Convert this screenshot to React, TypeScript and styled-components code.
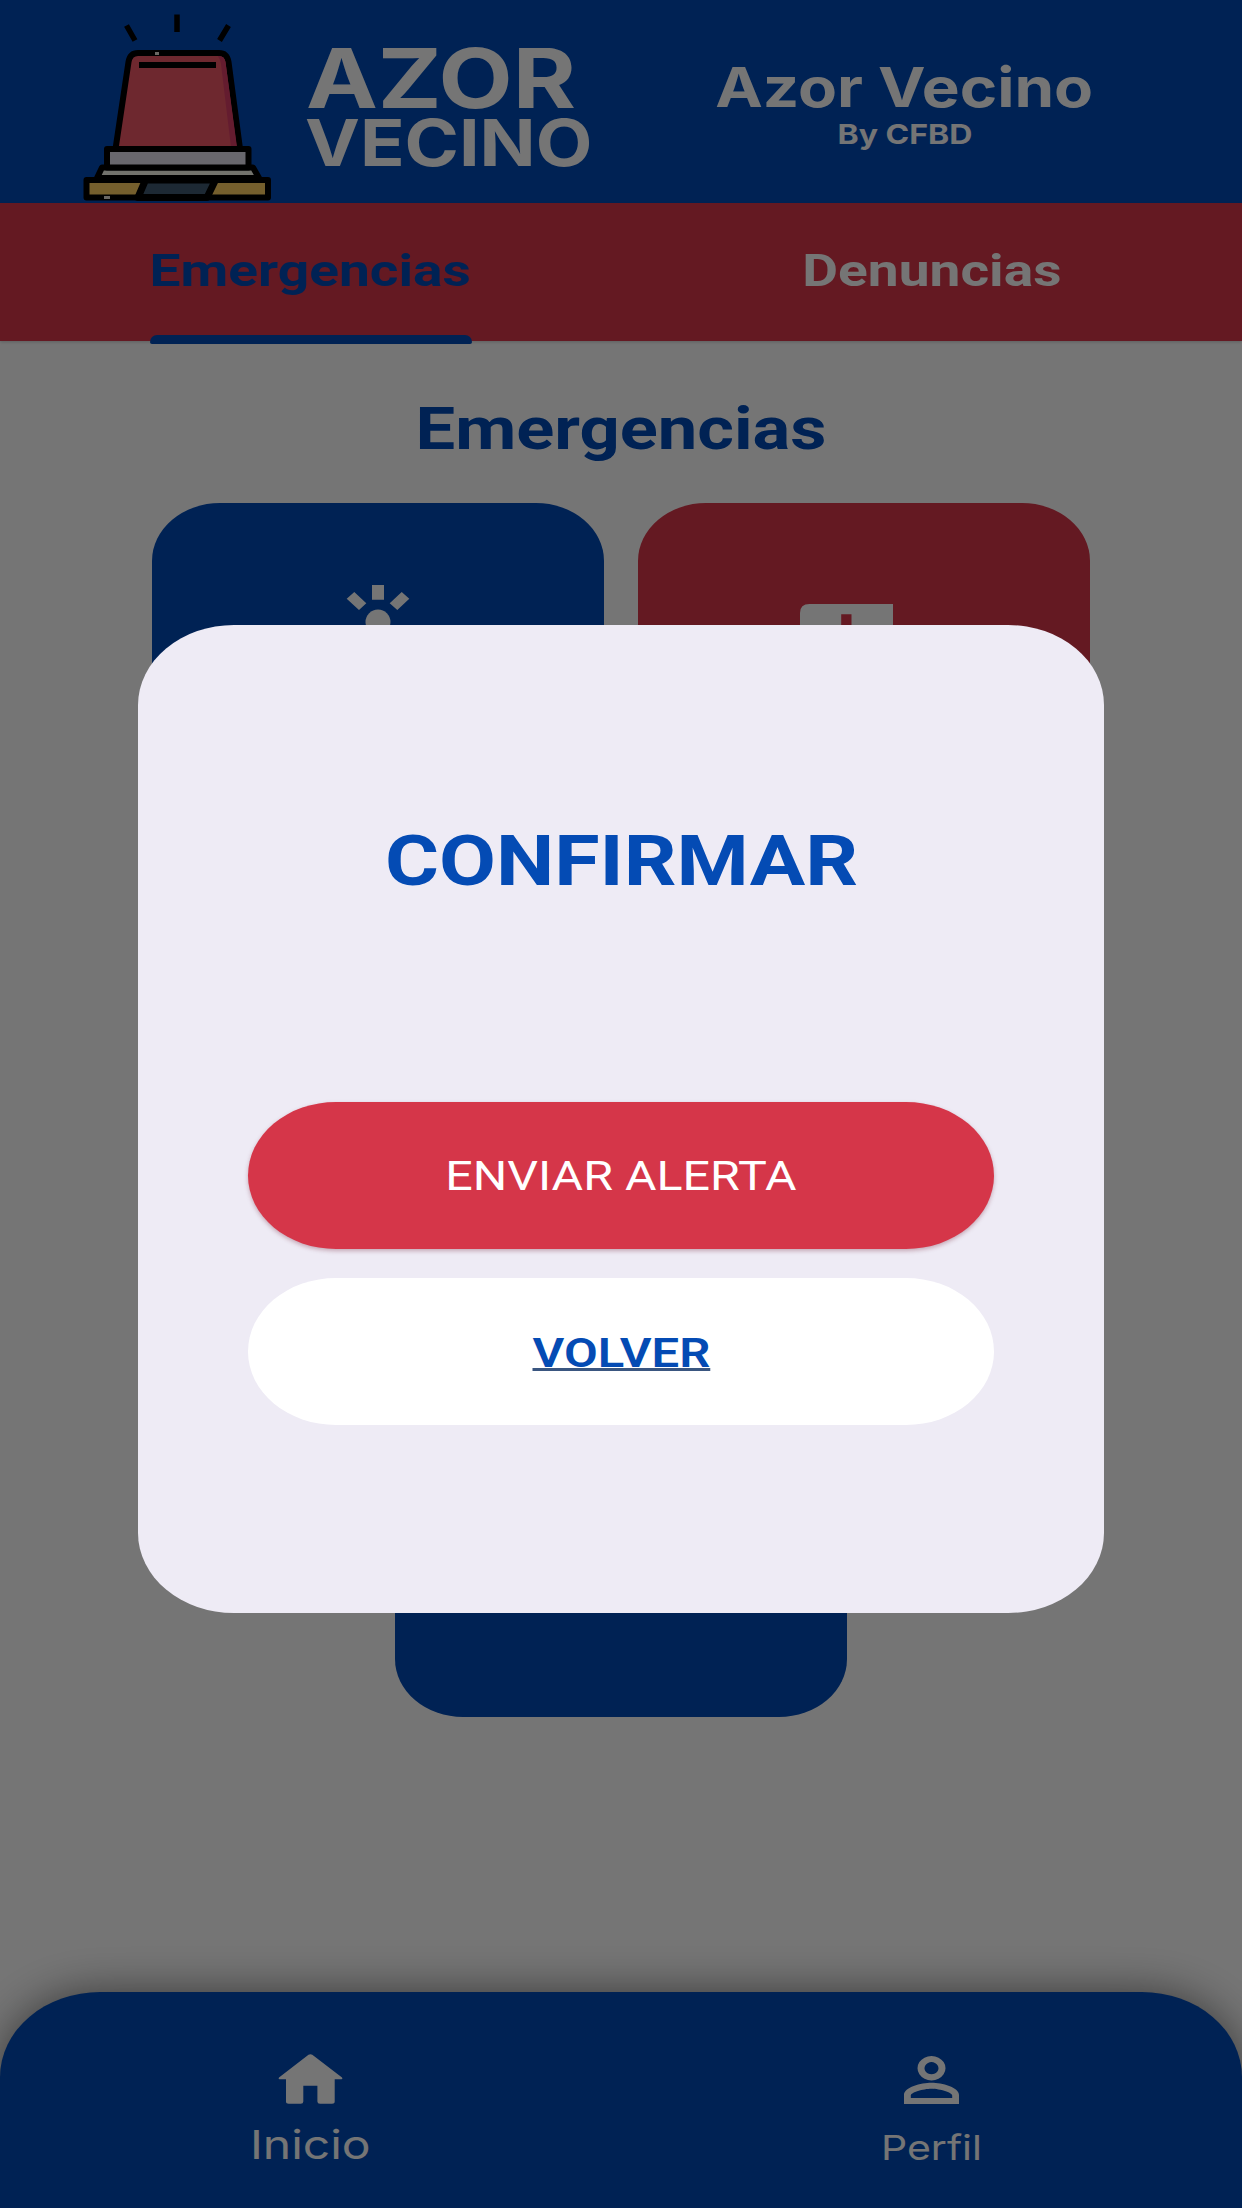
import React from 'react';
import styled, { createGlobalStyle } from 'styled-components';

const color = {
  blue: '#004bb8',
  blueText: '#044bb4',
  red: '#d9374a',
  action: '#d53649',
  white: '#ffffff',
  sheet: '#eeebf5',
};

const roboto = 'Roboto, "Liberation Sans", sans-serif';
const inter = 'Inter, "Liberation Sans", sans-serif';

const GlobalStyle = createGlobalStyle`
  *, *::before, *::after { box-sizing: border-box; }
  html, body { margin: 0; padding: 0; }
  body { background: #757575; overflow: hidden; }
`;

const Screen = styled.div`
  position: relative;
  display: flex;
  flex-direction: column;
  width: 1242px;
  height: 2208px;
  overflow: hidden;
  background: ${color.white};
  font-family: ${roboto};
`;

/* Wide lettering: the glyphs are stretched horizontally by `$wide`. */
const Wide = styled.span<{ $wide: number; $origin?: string }>`
  display: block;
  white-space: nowrap;
  transform: scaleX(${(p) => p.$wide});
  transform-origin: ${(p) => p.$origin ?? 'center'};
`;

const Header = styled.header`
  display: flex;
  flex: none;
  height: 203px;
  padding-left: 80px;
  background: ${color.blue};
`;

const LogoArt = styled.svg`
  flex: none;
  width: 195px;
  height: 203px;
`;

const Brand = styled.div`
  flex: none;
  width: 290px;
  margin-left: 31px;
  padding-top: 47px;
  font-family: ${inter};
  font-weight: 700;
  color: ${color.white};
`;

const BrandTop = styled(Wide)`
  font-size: 82px;
  line-height: 64px;
`;

const BrandBottom = styled(Wide)`
  margin-left: -1px;
  font-size: 64px;
  line-height: 63px;
`;

const AppTitle = styled.div`
  display: flex;
  flex-direction: column;
  align-items: center;
  width: 376px;
  margin-left: 120px;
  padding-top: 57px;
  font-family: ${inter};
  color: ${color.white};
`;

const AppName = styled(Wide)`
  font-size: 55px;
  font-weight: 700;
  line-height: 60px;
`;

const AppOwner = styled(Wide)`
  padding-left: 1px;
  font-size: 27.5px;
  font-weight: 700;
  line-height: 34px;
`;

const Tabs = styled.nav`
  display: grid;
  grid-template-columns: 1fr 1fr;
  flex: none;
  height: 138px;
  background: ${color.red};
  box-shadow: 0 1px 3px rgba(0, 0, 0, 0.2);
`;

const Tab = styled.div<{ $active?: boolean }>`
  position: relative;
  display: flex;
  align-items: center;
  justify-content: center;
  padding-bottom: 4px;
  font-size: 45px;
  font-weight: 700;
  color: ${(p) => (p.$active ? color.blue : color.white)};
`;

const TabMarker = styled.i`
  position: absolute;
  left: 150px;
  bottom: -3px;
  width: 322px;
  height: 9px;
  border-radius: 7px 7px 2px 2px;
  background: ${color.blue};
`;

const Content = styled.main`
  flex: 1;
  padding-top: 48px;
`;

const SectionTitle = styled.h1`
  display: flex;
  justify-content: center;
  margin: 0;
  font-size: 59px;
  font-weight: 700;
  line-height: 80px;
  color: ${color.blue};
`;

const CardGrid = styled.div`
  display: flex;
  flex-wrap: wrap;
  justify-content: center;
  gap: 29.75px 34.5px;
  width: 939px;
  margin: 33.5px auto 0;
`;

const Card = styled.div<{ $tone: 'blue' | 'red'; $top?: number }>`
  display: flex;
  justify-content: center;
  align-items: flex-start;
  width: 452px;
  height: 385px;
  padding-top: ${(p) => p.$top ?? 0}px;
  border-radius: 68px / 58px;
  background: ${(p) => color[p.$tone]};
`;

const BottomNav = styled.nav`
  display: grid;
  grid-template-columns: 1fr 1fr;
  flex: none;
  height: 216.5px;
  border-radius: 100px 100px 0 0 / 85px 85px 0 0;
  background: ${color.blue};
  box-shadow: 0 0 44px rgba(0, 0, 0, 0.5);
`;

const NavItem = styled.div<{ $top: number; $size: number; $gap: number }>`
  display: flex;
  flex-direction: column;
  align-items: center;
  gap: ${(p) => p.$gap}px;
  padding-top: ${(p) => p.$top}px;
  font-family: ${inter};
  font-size: ${(p) => p.$size}px;
  font-weight: 400;
  line-height: 50px;
  color: ${color.white};
`;

const Backdrop = styled.div`
  position: absolute;
  inset: 0;
  display: flex;
  justify-content: center;
  align-items: flex-start;
  padding-top: 625px;
  background: rgba(0, 0, 0, 0.54);
`;

const Dialog = styled.section`
  display: flex;
  flex-direction: column;
  align-items: center;
  width: 966px;
  height: 988px;
  padding-top: 196px;
  border-radius: 96px / 80px;
  background: ${color.sheet};
`;

const DialogTitle = styled.h2`
  margin: 0 0 200.5px;
  font-size: 70px;
  font-weight: 700;
  line-height: 80px;
  color: ${color.blueText};
`;

const DialogActions = styled.div`
  display: flex;
  flex-direction: column;
  gap: 29px;
  width: 746px;
`;

const Button = styled.button<{ $primary?: boolean }>`
  display: flex;
  align-items: center;
  justify-content: center;
  height: 147px;
  padding: ${(p) => (p.$primary ? '2px 0 0' : '4px 0 0')};
  border: 0;
  border-radius: 88px / 73.5px;
  background: ${(p) => (p.$primary ? color.action : color.white)};
  box-shadow: ${(p) => (p.$primary ? '0 2px 4px rgba(120, 40, 60, 0.35)' : 'none')};
  font-family: ${roboto};
  font-size: 41px;
  font-weight: ${(p) => (p.$primary ? 400 : 600)};
  line-height: 50px;
  color: ${(p) => (p.$primary ? color.white : color.blueText)};
`;

const ButtonLabel = styled(Wide)<{ $underlined?: boolean }>`
  text-decoration: ${(p) => (p.$underlined ? 'underline 3px #3a5680' : 'none')};
  text-decoration-skip-ink: none;
  text-underline-offset: 1px;
`;

const SirenLogo = () => (
  <LogoArt viewBox="80 0 195 203">
    <g stroke="#000" strokeWidth="6" strokeLinejoin="round">
      <path d="M177 14.500V32M126.500 25.500L135 40.500M228.500 25.500L219.500 40.500" strokeWidth="5.500" fill="none" />
      <path d="M115.500 149L128.500 62Q130 53 138 53H219Q227 53 228.500 62L240 149Z" fill="#ef5766" />
      <path d="M218 56H219Q224.500 56 225.500 62L237 147H231L221 64Q220 59 218 56Z" fill="#d93d68" stroke="none" />
      <path d="M139 65H216" fill="none" />
      <path d="M97 178L102 167.500H253L259 178Z" fill="#fafaee" />
      <path d="M107 149H248.500V167.500H107Z" fill="#e2e0ee" />
      <path d="M86.500 180H268V197.500H86.500Z" fill="#ffd062" />
      <path d="M145.500 180H215.500L207 197.500H138Z" fill="#415b72" strokeWidth="7" />
    </g>
    <path d="M104 196h6v3h-6zM155 52h4v3h-4z" fill="#e6e0d8" />
  </LogoArt>
);

const SirenIcon = () => (
  <svg width="130" height="120" viewBox="313 585 130 120" fill="#fff">
    <path d="M372 585h12v14.700h-12zM346.700 598.700l7.600-6.700 12 11.300-7.300 6.700zM409.300 598.700l-7.600-6.700-12 11.300 7.600 6.700z" />
    <circle cx="378" cy="622" r="12.500" />
    <path d="M340 680l10-36h56l10 36zM333 684h90v14h-90z" />
  </svg>
);

const AmbulanceIcon = () => (
  <svg width="128" height="100" viewBox="800.5 604 128 100">
    <path
      fill="#fff"
      fillRule="evenodd"
      d="M810 604H893.500V628H908L928.500 656V686H800.500V613Q800.500 604 810 604ZM841.700 614.300H852V632H869V642H852V660H841.700V642H825V632H841.700Z"
    />
    <circle cx="826" cy="688" r="13" fill="#fff" />
    <circle cx="902" cy="688" r="13" fill="#fff" />
  </svg>
);

const HomeIcon = () => (
  <svg width="65" height="50" viewBox="0 0 65 50" fill="#fff">
    <path d="M30.500 0.800Q32.400 -0.500 34.300 0.800L64 23.400Q65 25.200 63.400 25.200H56.700V47.500Q56.700 49.700 54 49.700H42Q39.400 49.700 39.400 47.500V31.700H25.300V47.500Q25.300 49.700 22.700 49.700H10.700Q8 49.700 8 47.500V25.200H1.600Q0 25.200 1 23.400Z" />
  </svg>
);

const PersonIcon = () => (
  <svg width="55" height="48" viewBox="0 0 55 48" fill="#fff" fillRule="evenodd">
    <path d="M27.500 0a14 12.200 0 1 0 0.010 0zM27.500 6.100a7 6.100 0 1 1 -0.010 0z" />
    <path d="M0 48V39C0 31 17 26.700 27.500 26.700S55 31 55 39V48ZM6.800 42H48.200V39.500C48.200 36.500 36 32.800 27.500 32.800S6.800 36.500 6.800 39.500Z" />
  </svg>
);

export default function App() {
  return (
    <>
      <GlobalStyle />
      <Screen>
        <Header>
          <SirenLogo />
          <Brand>
            <BrandTop $wide={1.174} $origin="left">AZOR</BrandTop>
            <BrandBottom $wide={1.149} $origin="left">VECINO</BrandBottom>
          </Brand>
          <AppTitle>
            <AppName $wide={1.158}>Azor Vecino</AppName>
            <AppOwner $wide={1.165}>By CFBD</AppOwner>
          </AppTitle>
        </Header>
        <Tabs>
          <Tab $active>
            <Wide $wide={1.224}>Emergencias</Wide>
            <TabMarker />
          </Tab>
          <Tab>
            <Wide $wide={1.224}>Denuncias</Wide>
          </Tab>
        </Tabs>
        <Content>
          <SectionTitle>
            <Wide $wide={1.194}>Emergencias</Wide>
          </SectionTitle>
          <CardGrid>
            <Card $tone="blue" $top={82.5}><SirenIcon /></Card>
            <Card $tone="red" $top={101.5}><AmbulanceIcon /></Card>
            <Card $tone="blue" />
            <Card $tone="red" />
            <Card $tone="blue" />
          </CardGrid>
        </Content>
        <BottomNav>
          <NavItem $top={62.5} $size={40} $gap={16}>
            <HomeIcon />
            <Wide $wide={1.2}>Inicio</Wide>
          </NavItem>
          <NavItem $top={64.5} $size={34.5} $gap={18.5}>
            <PersonIcon />
            <Wide $wide={1.188}>Perfil</Wide>
          </NavItem>
        </BottomNav>
        <Backdrop>
          <Dialog>
            <DialogTitle>
              <Wide $wide={1.18}>CONFIRMAR</Wide>
            </DialogTitle>
            <DialogActions>
              <Button $primary>
                <ButtonLabel $wide={1.18}>ENVIAR ALERTA</ButtonLabel>
              </Button>
              <Button>
                <ButtonLabel $wide={1.195} $underlined>VOLVER</ButtonLabel>
              </Button>
            </DialogActions>
          </Dialog>
        </Backdrop>
      </Screen>
    </>
  );
}
